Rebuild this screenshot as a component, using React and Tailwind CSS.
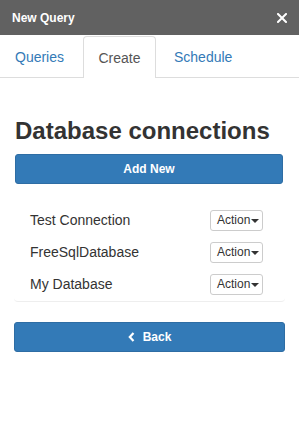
import React from 'react';

const connections = ['Test Connection', 'FreeSqlDatabase', 'My Database'];

const ActionButton = () => (
  <button
    type="button"
    className="flex h-[21px] w-[53px] items-center rounded-[3px] border border-[#cccccc] bg-white pl-[6px] text-[12px] leading-none text-[#333333]"
  >
    <span>Action</span>
    <span className="ml-[1px] mt-[1px] h-0 w-0 border-x-[4px] border-t-[4px] border-x-transparent border-t-[#333333]" />
  </button>
);

const App = () => {
  return (
    <div className="h-[448px] w-[299px] bg-white font-['Liberation_Sans',Arial,sans-serif] text-[14px] text-[#333333]">
      <div className="flex h-[35px] items-center justify-between bg-[#616161] pl-[12px] pr-[12px]">
        <span className="text-[12px] font-bold text-white">New Query</span>
        <svg width="10" height="10" viewBox="0 0 10 10" className="mt-[1px]">
          <path d="M1 1 L9 9 M9 1 L1 9" stroke="white" strokeWidth="2" strokeLinecap="square" />
        </svg>
      </div>

      <div className="mt-[1px] flex h-[42px] border-b border-[#dddddd]">
        <div className="flex w-[81px] items-center pl-[15px] pt-[1px] text-[#337ab7]">Queries</div>
        <div className="ml-[2px] flex h-[42px] w-[73px] items-center justify-center rounded-t-[4px] border border-b-0 border-[#dddddd] bg-white pt-[1px] text-[#555555]">
          Create
        </div>
        <div className="ml-[2px] flex items-center pl-[16px] pt-[1px] text-[#337ab7]">Schedule</div>
      </div>

      <div className="px-[14px]">
        <h3 className="mt-[40px] pl-[1px] text-[24px] font-bold leading-[26.4px] text-[#333333]">
          Database connections
        </h3>

        <button
          type="button"
          className="mx-[1px] mt-[10px] flex h-[30px] w-[268px] items-center justify-center rounded-[3px] border border-[#2e6da4] bg-[#337ab7] text-[12px] font-bold text-white"
        >
          Add New
        </button>

        <div className="mt-[20px] rounded-b-[4px] border-b border-[#eeeeee] pb-[1px]">
          {connections.map((name) => (
            <div key={name} className="flex h-[32px] items-center justify-between pl-[16px] pr-[22px]">
              <span>{name}</span>
              <ActionButton />
            </div>
          ))}
        </div>

        <button
          type="button"
          className="mt-[20px] flex h-[30px] w-full items-center justify-center rounded-[3px] border border-[#2e6da4] bg-[#337ab7] text-[12px] font-bold text-white"
        >
          <svg width="7" height="10" viewBox="0 0 7 10" className="mr-[8px]">
            <path d="M5.5 1 L1.8 5 L5.5 9" fill="none" stroke="white" strokeWidth="2.2" />
          </svg>
          Back
        </button>
      </div>
    </div>
  );
};

export default App;
